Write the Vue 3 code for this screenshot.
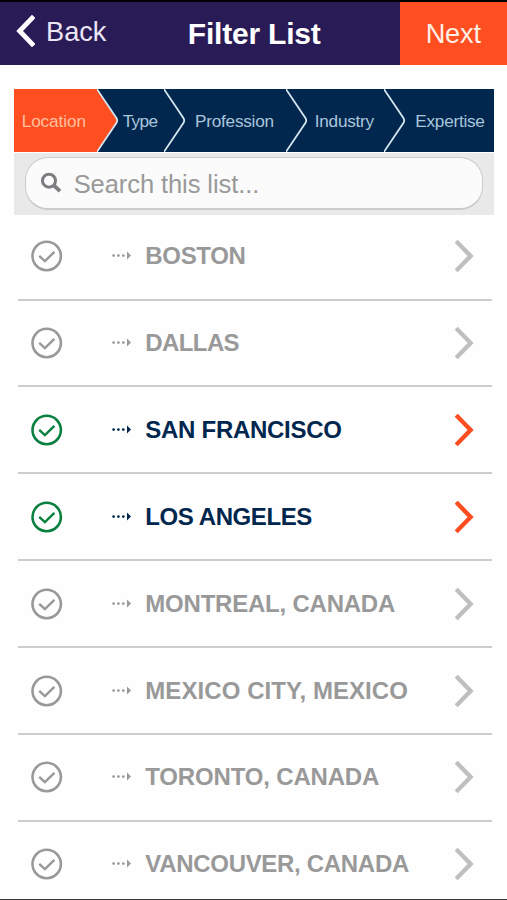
<script setup>
const steps = [
  { label: 'Location', cls: 'location', active: true },
  { label: 'Type', cls: 'type' },
  { label: 'Profession', cls: 'profession' },
  { label: 'Industry', cls: 'industry' },
  { label: 'Expertise', cls: 'expertise', last: true },
]
const cities = [
  { name: 'BOSTON', tracking: -0.33 },
  { name: 'DALLAS', tracking: -0.6 },
  { name: 'SAN FRANCISCO', tracking: -0.28, selected: true },
  { name: 'LOS ANGELES', tracking: -0.42, selected: true },
  { name: 'MONTREAL, CANADA', tracking: -0.22 },
  { name: 'MEXICO CITY, MEXICO', tracking: 0.07 },
  { name: 'TORONTO, CANADA', tracking: -0.17 },
  { name: 'VANCOUVER, CANADA', tracking: -0.31 },
]
</script>

<template>
  <div class="screen">
    <header class="bar">
      <button class="back">
        <svg class="back-icon" width="20" height="34" viewBox="0 0 20 34">
          <path d="M18.7 2.3 4.6 17 18.7 31.7" fill="none" stroke="currentColor" stroke-width="4.8" />
        </svg>
        <span class="back-label">Back</span>
      </button>
      <h1 class="title">Filter List</h1>
      <button class="next">Next</button>
    </header>

    <nav class="steps">
      <div v-for="s in steps" :key="s.label" class="step" :class="[s.cls, { active: s.active }]">
        <span class="step-label">{{ s.label }}</span>
        <svg v-if="!s.last" class="step-tip" width="24" height="63" viewBox="0 0 24 63">
          <path class="tip-fill" d="M0 0H0L19.4 29Q21 31.5 19.4 34L0 63H0Z" />
          <path class="tip-line" d="M-.5-.5 19.4 29Q21 31.5 19.4 34L-.5 63.5" />
        </svg>
      </div>
    </nav>

    <div class="search">
      <label class="field">
        <svg class="glass" width="22" height="22" viewBox="0 0 22 22">
          <circle cx="9" cy="8.7" r="6.5" fill="none" stroke="#7b7d80" stroke-width="3" />
          <path d="M13.4 13 20 19.2" stroke="#7b7d80" stroke-width="3.8" />
        </svg>
        <span class="placeholder">Search this list...</span>
      </label>
    </div>

    <ul class="list">
      <li v-for="c in cities" :key="c.name" class="row" :class="{ selected: c.selected }">
        <svg class="check" width="32" height="32" viewBox="0 0 32 32">
          <circle cx="15.7" cy="16" r="14.2" fill="none" stroke="currentColor" stroke-width="2.6" />
          <path d="M8.2 15.8 13.9 21.2 23.4 11.9" fill="none" stroke="currentColor" stroke-width="2.4" />
        </svg>
        <svg class="dots" width="20" height="10" viewBox="0 0 20 10">
          <circle cx="1.6" cy="4.6" r="1.35" />
          <circle cx="6.4" cy="4.6" r="1.35" />
          <circle cx="11.3" cy="4.6" r="1.35" />
          <path d="M15 .6 19 4.6 15 8.6Z" />
        </svg>
        <span class="name" :style="{ letterSpacing: c.tracking + 'px' }">{{ c.name }}</span>
        <svg class="chevron" width="20" height="34" viewBox="0 0 20 34">
          <path d="M1.2 2.2 15.6 17 1.2 31.8" fill="none" stroke="currentColor" stroke-width="4.4" />
        </svg>
      </li>
    </ul>
  </div>
</template>

<style>
body {
  margin: 0;
  background: #fff;
}
</style>

<style scoped>
.screen {
  box-sizing: border-box;
  width: 507px;
  height: 900px;
  overflow: hidden;
  border-top: 2px solid #000;
  border-bottom: 1px solid #3c3c3c;
  background: #fefefe;
  font-family: "Liberation Sans", Arial, sans-serif;
}
.bar {
  display: grid;
  grid-template-columns: 108px 1fr 107.5px;
  grid-template-rows: 63px;
  height: 63px;
  background: #291b55;
  color: #fff;
}
button {
  border: 0;
  padding: 0;
  background: none;
  color: inherit;
  font: inherit;
}
.back {
  display: flex;
  align-items: flex-start;
  padding: 12px 0 0 15px;
  gap: 11px;
  font-size: 27.2px;
  line-height: 34px;
  color: #ebe6f5;
}
.back-label { padding-top: 1px; }
.back-icon {
  color: #fff;
  flex: none;
}
.title {
  margin: 0;
  padding: 0 0 0 1px;
  text-align: center;
  font-size: 30px;
  letter-spacing: -0.2px;
  line-height: 64px;
  white-space: nowrap;
}
.next {
  height: 63px;
  background: #ff4e20;
  color: #ffefe6;
  font-size: 27.2px;
  letter-spacing: -0.2px;
  line-height: 62px;
}
.steps {
  display: flex;
  height: 63px;
  margin: 24px 13px 0 13.7px;
  background: #02274f;
}
.step {
  position: relative;
  box-sizing: border-box;
  color: #a9c6dc;
  font-size: 17.2px;
  letter-spacing: -0.25px;
  line-height: 64px;
  white-space: nowrap;
}
.step.location { width: 83.3px; padding-left: 8px; letter-spacing: -0.1px; }
.step.type { width: 67.5px; padding-left: 25.7px; letter-spacing: -0.6px; }
.step.profession { width: 121.5px; padding-left: 30.6px; }
.step.industry { width: 98.5px; padding-left: 28.8px; }
.step.expertise { flex: 1; padding-left: 30.8px; }
.step.active {
  background: #ff4e20;
  color: #ffc0a0;
}
.step-tip {
  position: absolute;
  top: 0;
  right: -24px;
}
.tip-fill { fill: #02274f; }
.active .tip-fill { fill: #ff4e20; }
.tip-line {
  fill: none;
  stroke: #d5e6f0;
  stroke-width: 1.8;
}
.search {
  margin: 1px 13px 0 13.7px;
  padding: 4px 11px 5px;
  background: #e9e9e9;
}
.field {
  display: flex;
  align-items: center;
  box-sizing: border-box;
  height: 53px;
  padding-left: 14px;
  gap: 12px;
  border: 1.5px solid #cbcbcb;
  border-bottom-width: 2px;
  border-radius: 23px;
  background: #fbfbfb;
}
.placeholder {
  padding-top: 3px;
  color: #999;
  font-size: 25.5px;
  letter-spacing: -0.08px;
}
.list {
  margin: -1.4px 15px 0 17.5px;
  padding: 0;
  list-style: none;
}
.row {
  display: flex;
  align-items: center;
  box-sizing: border-box;
  height: 86.9px;
  padding: 0 17px 0 13.3px;
  border-bottom: 2px solid #cdcdcd;
  color: #999;
}
.row:last-child { border-color: transparent; }
.check { flex: none; }
.dots {
  flex: none;
  margin-left: 49px;
  fill: currentColor;
}
.name {
  flex: 1;
  margin-left: 13.5px;
  font-size: 24px;
  font-weight: 700;
  white-space: nowrap;
}
.chevron {
  flex: none;
  color: #bfbfbf;
}
.selected { color: #02274f; }
.selected .check { color: #0a8040; }
.selected .chevron { color: #fb4d20; }
</style>
